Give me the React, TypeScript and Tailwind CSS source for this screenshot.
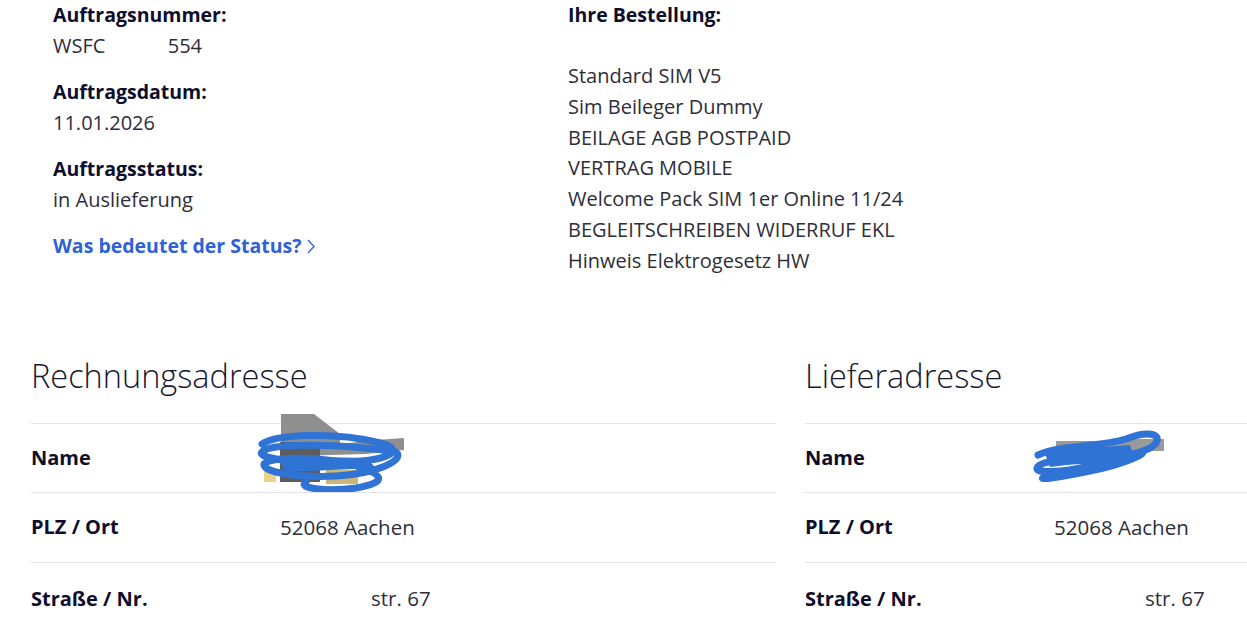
import React from 'react';

const FONT = "font-['Open_Sans',_'Liberation_Sans',_sans-serif]";

const orderItems = [
  'Standard SIM V5',
  'Sim Beileger Dummy',
  'BEILAGE AGB POSTPAID',
  'VERTRAG MOBILE',
  'Welcome Pack SIM 1er Online 11/24',
  'BEGLEITSCHREIBEN WIDERRUF EKL',
  'Hinweis Elektrogesetz HW',
];

const InfoGroup = ({ label, value }: { label: string; value: string }) => (
  <div className="mb-[15px]">
    <div className="text-[19.5px] leading-[31px] font-bold text-[#0d0e2c]">{label}</div>
    <div className="text-[20px] leading-[31px] text-[#2e2e38] whitespace-pre">{value}</div>
  </div>
);

// scribbled-over name, drawn like the reference
const Redaction = ({ variant }: { variant: 'billing' | 'delivery' }) =>
  variant === 'billing' ? (
    <svg width="160" height="80" viewBox="0 0 160 80" className="absolute left-[-24px] top-[-12px]">
      <polygon points="25,2 58,2 84,22 84,32 120,28 148,26 148,38 110,42 40,44 25,44" fill="#8f8f8f" />
      <rect x="8" y="56" width="12" height="14" fill="#e8d48a" />
      <rect x="24" y="30" width="40" height="40" fill="#5d5d5d" />
      <rect x="70" y="58" width="32" height="14" fill="#c9b777" />
      <path
        d="M6,32 C20,22 80,20 120,30 C150,36 140,48 90,50 C40,52 0,46 6,40 C12,30 90,32 140,40 C150,48 120,62 80,64 C40,66 6,60 8,52 C14,44 70,44 100,54 C126,62 134,70 100,76 C70,80 40,76 50,70"
        fill="none"
        stroke="#2f73d4"
        strokeWidth="7"
        strokeLinecap="round"
        strokeLinejoin="round"
      />
      <path d="M20,44 L110,46 L120,56 L30,60 Z" fill="#2f73d4" />
    </svg>
  ) : (
    <svg width="140" height="60" viewBox="0 0 140 60" className="absolute left-[-24px] top-[3px]">
      <polygon points="26,14 70,14 110,12 134,12 134,24 26,24" fill="#9a9a9a" />
      <path
        d="M8,28 C30,18 70,20 96,12 C116,4 132,6 126,16 C118,28 70,34 30,34 C10,34 2,42 10,44 C40,48 90,30 110,26 C120,24 100,36 60,44 C30,50 6,54 14,50 C30,44 60,40 80,34"
        fill="none"
        stroke="#2f73d4"
        strokeWidth="7"
        strokeLinecap="round"
        strokeLinejoin="round"
      />
      <path d="M14,24 L100,18 L104,30 L20,40 Z" fill="#2f73d4" />
    </svg>
  );

const AddressTable = ({ title, variant }: { title: string; variant: 'billing' | 'delivery' }) => (
  <div>
    <h2 className="text-[32.5px] leading-[40px] font-light text-[#18182e] mb-[27px]">{title}</h2>
    <div className="border-t border-[#e3e3e6]">
      <div className="h-[69px] flex items-center border-b border-[#e3e3e6]">
        <div className="w-[249px] text-[20px] font-bold text-[#0d0e2c]">Name</div>
        <div className="relative h-full flex items-center">
          <Redaction variant={variant} />
        </div>
      </div>
      <div className="h-[70px] flex items-center border-b border-[#e3e3e6]">
        <div className="w-[249px] text-[20px] font-bold text-[#0d0e2c]">PLZ / Ort</div>
        <div className="text-[20.5px] text-[#2e2e38]">52068 Aachen</div>
      </div>
      <div className="h-[72px] flex items-center">
        <div className="w-[249px] text-[20px] font-bold text-[#0d0e2c]">Straße / Nr.</div>
        <div className="pl-[91px] text-[20.5px] text-[#2e2e38]">str. 67</div>
      </div>
    </div>
  </div>
);

export default function App() {
  return (
    <div className={`w-[1247px] h-[628px] overflow-hidden bg-white ${FONT}`}>
      <div className="flex pl-[53px] -mt-[1px]">
        <div className="w-[515px]">
          <InfoGroup label="Auftragsnummer:" value={'WSFC            554'} />
          <InfoGroup label="Auftragsdatum:" value="11.01.2026" />
          <InfoGroup label="Auftragsstatus:" value="in Auslieferung" />
          <a href="#" className="flex items-center gap-[6px] text-[19.5px] leading-[31px] font-bold text-[#2f62d8]">
            Was bedeutet der Status?
            <svg width="8" height="15" viewBox="0 0 8 15" className="mt-[1px]">
              <path d="M1,1 L7,7.5 L1,14" fill="none" stroke="#2f62d8" strokeWidth="1.3" />
            </svg>
          </a>
        </div>
        <div>
          <div className="text-[19.5px] leading-[31px] font-bold text-[#0d0e2c]">Ihre Bestellung:</div>
          <div className="h-[31px]" />
          {orderItems.map((item) => (
            <div key={item} className="text-[20px] leading-[30.8px] text-[#2e2e38]">
              {item}
            </div>
          ))}
        </div>
      </div>
      <div className="mt-[79px] pl-[31px] grid grid-cols-[745px_745px] gap-[29px]">
        <AddressTable title="Rechnungsadresse" variant="billing" />
        <AddressTable title="Lieferadresse" variant="delivery" />
      </div>
    </div>
  );
}
